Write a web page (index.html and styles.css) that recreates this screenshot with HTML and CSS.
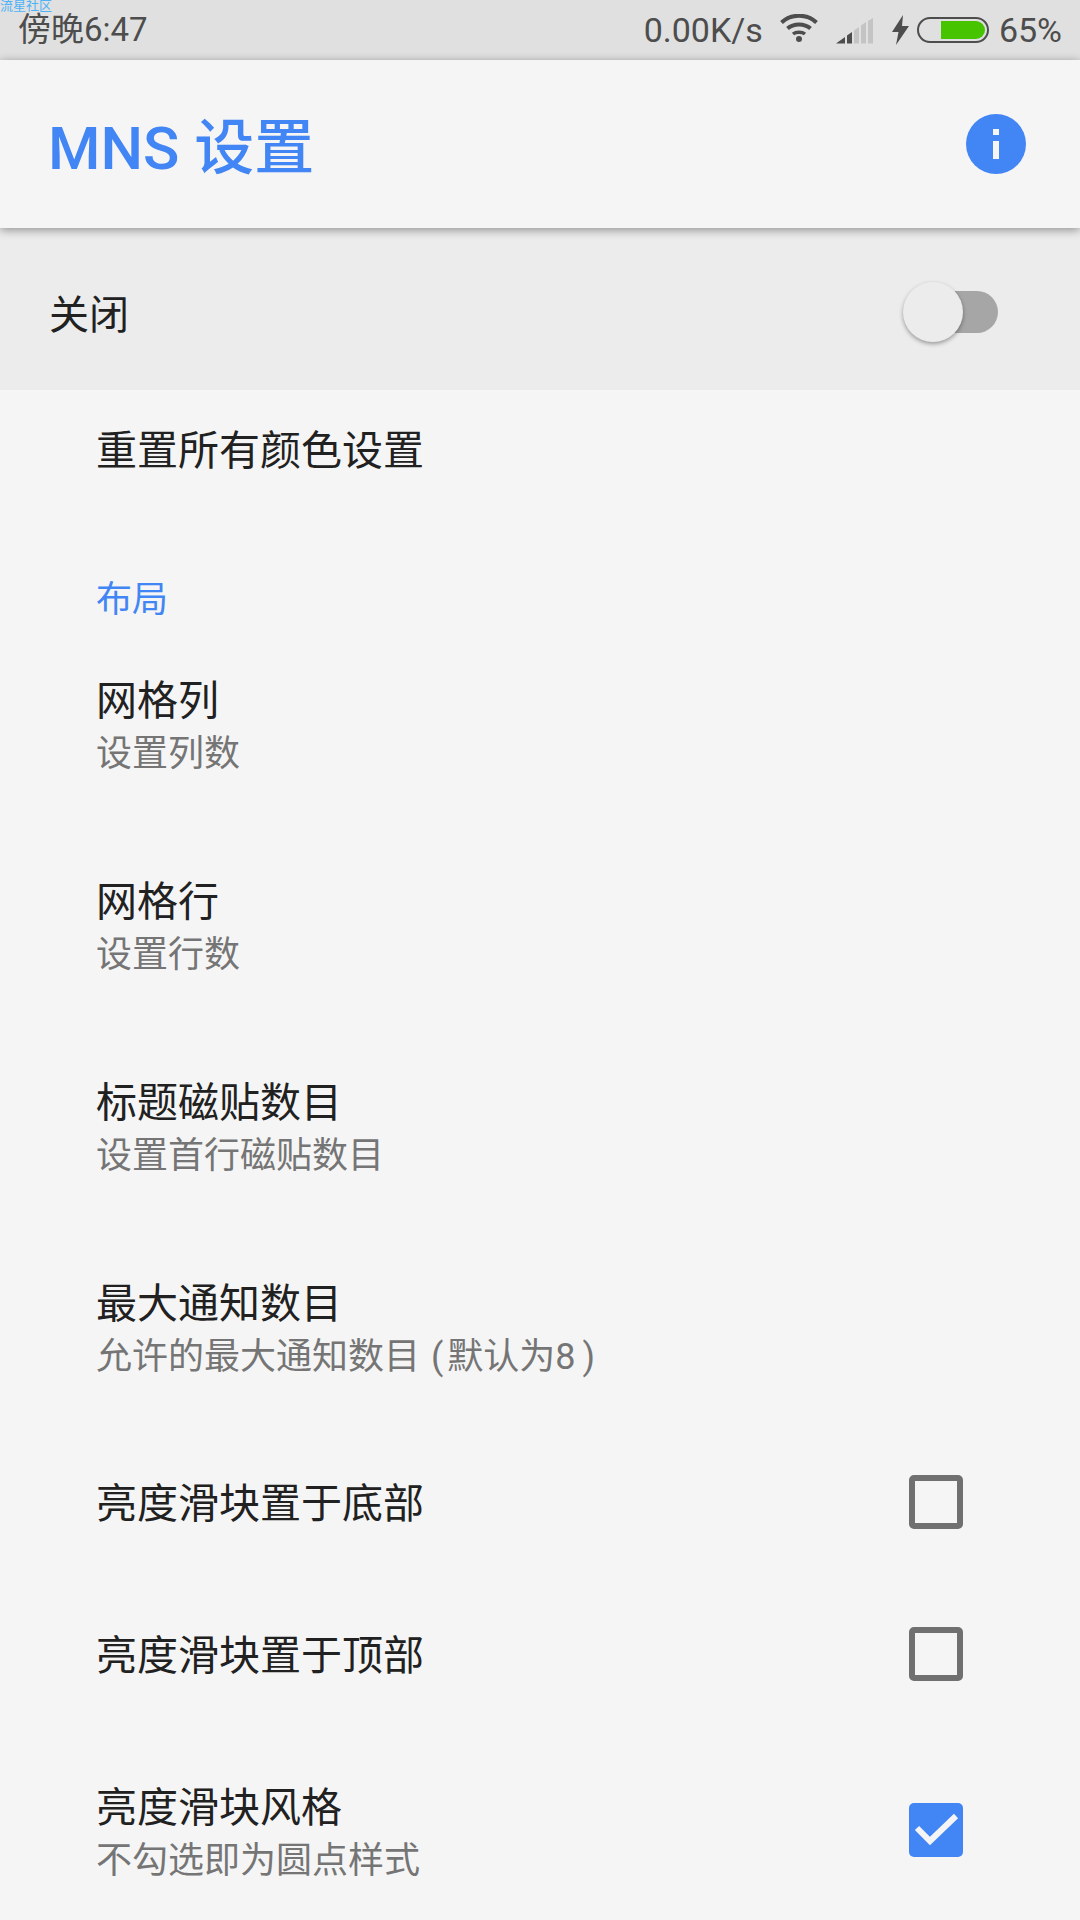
FILE: index.html
```html
<!DOCTYPE html>
<html lang="zh-CN">
<head>
    <meta charset="UTF-8">
    <meta name="viewport" content="width=device-width, initial-scale=1.0">
    <title>MNS 设置</title>
    <link rel="stylesheet" href="styles.css">
</head>
<body>
    <div class="watermark">流星社区</div>

    <!-- Barra de estado -->
    <div class="status-bar">
        <div class="status-time">傍晚6:47</div>
        <div class="status-right">
            <span class="net-speed">0.00K/s</span>
            <svg class="icon-wifi" width="38" height="28" viewBox="0 0 38 28">
                <path d="M1.5 8.5C11 -0.5 27 -0.5 36.5 8.5" fill="none" stroke="#4d4d4d" stroke-width="4"/>
                <path d="M7.5 14.5C13.5 9 24.5 9 30.5 14.5" fill="none" stroke="#4d4d4d" stroke-width="4"/>
                <path d="M13 20C16 17.5 22 17.5 25 20" fill="none" stroke="#4d4d4d" stroke-width="3.5"/>
                <circle cx="19" cy="25" r="3" fill="#4d4d4d"/>
            </svg>
            <svg class="icon-signal" width="37" height="26" viewBox="0 0 37 26">
                <path d="M0 25.5L9 19V25.5Z" fill="#4d4d4d"/>
                <path d="M11 17.500L16 14V25.5H11Z" fill="#4d4d4d"/>
                <path d="M18 12.500L23 9V25.5H18Z" fill="#c4c4c4"/>
                <path d="M25 7.5L30 4V25.5H25Z" fill="#c4c4c4"/>
                <path d="M32 3L37 0V25.5H32Z" fill="#c4c4c4"/>
            </svg>
            <svg class="icon-bolt" width="17" height="30" viewBox="0 0 17 30">
                <path d="M11 0L0 17H6.500L4 30L17 11H10Z" fill="#4d4d4d"/>
            </svg>
            <div class="battery">
                <div class="battery-fill"></div>
            </div>
            <span class="battery-pct">65%</span>
        </div>
    </div>

    <!-- Cabecera -->
    <div class="app-bar">
        <h1 class="app-title">MNS 设置</h1>
        <div class="info-btn">
            <span class="info-dot"></span>
            <span class="info-stem"></span>
        </div>
    </div>

    <div class="master-row">
        <span class="master-label">关闭</span>
        <div class="switch">
            <div class="switch-thumb"></div>
        </div>
    </div>

    <div class="item item-reset">
        <div class="item-title">重置所有颜色设置</div>
    </div>

    <div class="section-title">布局</div>

    <div class="item">
        <div class="item-title">网格列</div>
        <div class="item-sub">设置列数</div>
    </div>
    <div class="item">
        <div class="item-title">网格行</div>
        <div class="item-sub">设置行数</div>
    </div>
    <div class="item">
        <div class="item-title">标题磁贴数目</div>
        <div class="item-sub">设置首行磁贴数目</div>
    </div>
    <div class="item">
        <div class="item-title">最大通知数目</div>
        <div class="item-sub">允许的最大通知数目<span class="paren-open">(</span>默认为8<span class="paren-close">)</span></div>
    </div>

    <div class="check-group">
        <div class="item item-check item-short">
            <div class="item-text">
                <div class="item-title">亮度滑块置于底部</div>
            </div>
            <div class="checkbox"></div>
        </div>
        <div class="item item-check item-short">
            <div class="item-text">
                <div class="item-title">亮度滑块置于顶部</div>
            </div>
            <div class="checkbox"></div>
        </div>
        <div class="item item-check item-last">
            <div class="item-text">
                <div class="item-title">亮度滑块风格</div>
                <div class="item-sub">不勾选即为圆点样式</div>
            </div>
            <div class="checkbox checked">
                <svg width="54" height="54" viewBox="0 0 54 54">
                    <path d="M8 25L21 38L47 13" fill="none" stroke="#f5f5f5" stroke-width="6"/>
                </svg>
            </div>
        </div>
    </div>
</body>
</html>
```

FILE: styles.css
```css
* {
    margin: 0;
    padding: 0;
    box-sizing: border-box;
}

body {
    width: 1080px;
    height: 1920px;
    overflow: hidden;
    position: relative;
    background: #f5f5f5;
    font-family: 'Roboto', 'Noto Sans CJK SC', sans-serif;
    color: #212121;
}

.watermark {
    position: absolute;
    top: 0;
    left: 0;
    font-size: 13px;
    line-height: 12px;
    color: #4db2f8;
}

.status-bar {
    height: 60px;
    background: #e0e0e0;
    color: #4d4d4d;
    font-size: 34px;
    display: flex;
    justify-content: space-between;
    align-items: center;
    padding: 0 18px 0 18px;
}

.status-time {
    font-size: 33px;
    line-height: 36px;
}

.status-right {
    display: flex;
    align-items: center;
}

.net-speed {
    margin-right: 17px;
}

.icon-wifi {
    margin-right: 18px;
    margin-top: -4px;
}

.icon-signal {
    margin-right: 19px;
    margin-top: 2px;
}

.icon-bolt {
    margin-right: 8px;
}

.battery {
    width: 72px;
    height: 26px;
    border: 2px solid #4d4d4d;
    border-radius: 13px;
    padding: 2px;
    display: flex;
    justify-content: flex-end;
    margin-right: 10px;
}

.battery-fill {
    width: 44px;
    background: #47c400;
    border-radius: 0 9px 9px 0;
}

.app-bar {
    height: 168px;
    background: #f5f5f5;
    display: flex;
    justify-content: space-between;
    align-items: center;
    padding: 0 54px 0 48px;
    box-shadow: 0 2px 9px rgba(0, 0, 0, 0.4);
    position: relative;
}

.app-title {
    font-size: 60px;
    font-weight: 500;
    color: #4285f4;
    margin-top: -4px;
}

.info-btn {
    width: 60px;
    height: 60px;
    border-radius: 50%;
    background: #4285f4;
    display: flex;
    flex-direction: column;
    align-items: center;
    justify-content: center;
    gap: 6px;
}

.info-dot {
    width: 6px;
    height: 6px;
    background: #f5f5f5;
}

.info-stem {
    width: 6px;
    height: 18px;
    background: #f5f5f5;
}

.master-row {
    height: 162px;
    background: #ececec;
    display: flex;
    justify-content: space-between;
    align-items: center;
    padding: 6px 82px 0 49px;
}

.master-label {
    font-size: 40px;
}

.switch {
    width: 83px;
    height: 42px;
    background: #a6a6a6;
    border-radius: 21px;
    display: flex;
    align-items: center;
}

.switch-thumb {
    width: 60px;
    height: 60px;
    border-radius: 50%;
    background: #ececec;
    margin-left: -12px;
    flex-shrink: 0;
    box-shadow: 0 2px 4px rgba(0, 0, 0, 0.35);
}

.item {
    height: 201px;
    padding: 0 117px 0 96px;
    display: flex;
    flex-direction: column;
    justify-content: center;
}

.item-reset {
    height: 122px;
}

.item-title {
    font-size: 41px;
    line-height: 50px;
}

.item-sub {
    font-size: 36px;
    line-height: 44px;
    margin-top: 6px;
    color: #757575;
}

.paren-open {
    margin: 0 4px 0 11px;
}

.paren-close {
    margin-left: 7px;
}

.section-title {
    padding: 63px 0 0 96px;
    height: 113px;
    font-size: 36px;
    line-height: 50px;
    color: #4285f4;
}

.check-group {
    margin-top: -3px;
}

.item-check {
    flex-direction: row;
    justify-content: space-between;
    align-items: center;
}

.item-short {
    height: 152px;
}

.item-short .item-title {
    margin-top: 4px;
}

.item-last {
    height: 200px;
}

.item-last .item-text {
    margin-top: 5px;
}

.checkbox {
    width: 54px;
    height: 54px;
    border: 6px solid #707070;
    border-radius: 5px;
    flex-shrink: 0;
}

.checkbox.checked {
    border: none;
    background: #4285f4;
}

.checkbox svg {
    display: block;
}
```
